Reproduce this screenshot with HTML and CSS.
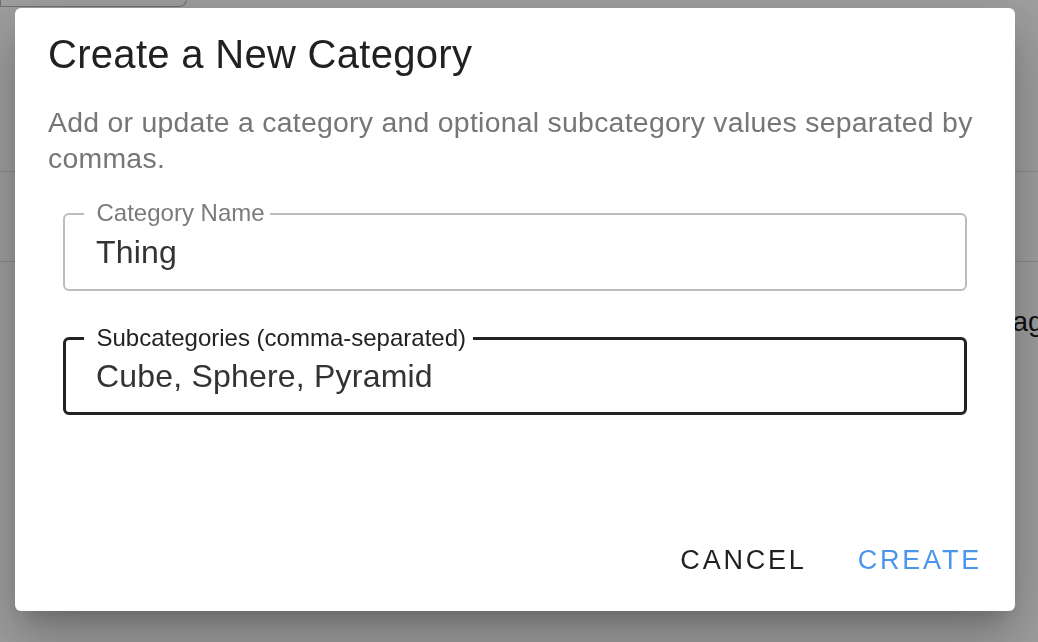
FILE: index.html
```html
<!DOCTYPE html>
<html lang="en">
<head>
<meta charset="utf-8">
<title>Create a New Category</title>
<link rel="stylesheet" href="styles.css">
</head>
<body>
<div class="page">
  <div class="top-card"></div>
  <div class="divider divider-first"></div>
  <div class="divider divider-second"></div>
  <p class="page-note">Manage</p>
</div>

<div class="backdrop">
  <div class="dialog" role="dialog" aria-labelledby="dlg-title">
    <h2 class="dialog-title" id="dlg-title">Create a New Category</h2>
    <p class="dialog-text">Add or update a category and optional subcategory values separated by commas.</p>

    <div class="fields">
      <fieldset class="field">
        <legend class="field-label">Category Name</legend>
        <div class="field-value">Thing</div>
      </fieldset>
      <fieldset class="field field-focused">
        <legend class="field-label">Subcategories (comma-separated)</legend>
        <div class="field-value">Cube, Sphere, Pyramid</div>
      </fieldset>
    </div>

    <div class="actions">
      <button class="btn btn-cancel" type="button">Cancel</button>
      <button class="btn btn-create" type="button">Create</button>
    </div>
  </div>
</div>
</body>
</html>
```

FILE: styles.css
```css
html, body {
  margin: 0;
  padding: 0;
  background: #ffffff;
  overflow: hidden;
  font-family: "Liberation Sans", Arial, sans-serif;
}

/* page behind the modal */
.page {
  width: 1060px;
  height: 642px;
}

.top-card {
  width: 187px;
  height: 40px;
  margin-top: -33px;
  box-sizing: border-box;
  border: 1px solid #b4b4b4;
  border-top: none;
  border-radius: 0 0 8px 0;
  background: #ffffff;
}

.divider {
  height: 1px;
  background: #dcdcdc;
}

.divider-first {
  margin-top: 164px;
}

.divider-second {
  margin-top: 89px;
}

.page-note {
  margin: 42px 0 0;
  padding-left: 958px;
  font-size: 28px;
  line-height: 36px;
  color: #1b1b1b;
  white-space: nowrap;
}

/* modal */
.backdrop {
  position: fixed;
  inset: 0;
  background: rgba(0, 0, 0, 0.375);
  display: flex;
  align-items: flex-start;
  padding: 8px 23px 31px 15px;
  box-sizing: border-box;
}

.dialog {
  width: 1000px;
  height: 603px;
  box-sizing: border-box;
  background: #ffffff;
  border-radius: 6px;
  padding: 0 33px 33px;
  display: flex;
  flex-direction: column;
  box-shadow:
    0 15px 21px -10px rgba(0, 0, 0, 0.2),
    0 34px 53px 4px rgba(0, 0, 0, 0.14),
    0 13px 64px 11px rgba(0, 0, 0, 0.12);
}

.dialog-title {
  margin: 22px 0 0;
  font-size: 40px;
  line-height: 48px;
  font-weight: 400;
  letter-spacing: 0.3px;
  color: #212121;
}

.dialog-text {
  margin: 26px 0 0;
  font-size: 28.4px;
  line-height: 36px;
  letter-spacing: 0.27px;
  color: #767676;
}

.fields {
  margin: 26px 15px 0;
  display: flex;
  flex-direction: column;
  gap: 35.5px;
}

.field {
  margin: 0;
  padding: 0;
  min-width: 0;
  border: 2px solid #bcbcbc;
  border-radius: 6px;
}

.field-label {
  margin-left: 18.5px;
  padding: 0 5px 2px 13px;
  font-size: 24px;
  line-height: 22px;
  color: #7b7b7b;
}

.field-value {
  padding: 6px 0 17px 31px;
  font-size: 32px;
  line-height: 40px;
  letter-spacing: 0.2px;
  color: #333333;
  white-space: nowrap;
}

.field-focused {
  border: 3px solid #222222;
}

.field-focused .field-label {
  margin-left: 17.5px;
  padding-right: 7px;
  color: #222222;
}

.field-focused .field-value {
  padding: 5px 0 16.5px 30px;
}

.actions {
  margin-top: auto;
  display: flex;
  justify-content: flex-end;
  gap: 51px;
}

.btn {
  margin: 0;
  padding: 0;
  border: none;
  background: none;
  font-family: "Liberation Sans", Arial, sans-serif;
  font-size: 27px;
  line-height: 36px;
  letter-spacing: 2.8px;
  text-transform: uppercase;
  cursor: pointer;
}

.btn-cancel {
  color: #212121;
}

.btn-create {
  color: #4a96ec;
}
```
